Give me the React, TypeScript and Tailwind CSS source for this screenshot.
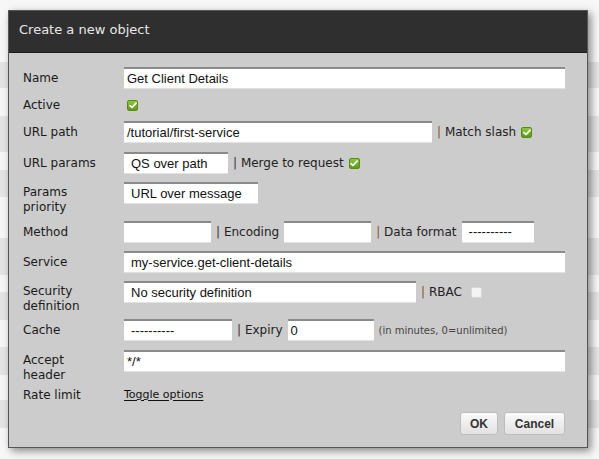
import React from 'react';

const labelFont = { fontFamily: '"DejaVu Sans", Verdana, sans-serif' };

const Check = ({ on }: { on: boolean }) =>
    on ? (
        <span className="inline-flex w-[11px] h-[11px] items-center justify-center rounded-[2px] border border-[#5a8a12] bg-gradient-to-b from-[#8cc63f] to-[#5e9a1a]">
            <svg width="8" height="7" viewBox="0 0 8 7">
                <path d="M1 3.6 L3 5.5 L7 1.2" stroke="white" strokeWidth="1.7" fill="none" strokeLinecap="round" strokeLinejoin="round" />
            </svg>
        </span>
    ) : (
        <span className="inline-block w-[11px] h-[11px] rounded-[2px] border border-[#d8d8d8] bg-[#f4f4f4]" />
    );

const Input = ({ value = '', w, pl = 'pl-[3px]' }: { value?: string; w: string; pl?: string }) => (
    <div
        className={`${w} h-[22px] flex items-center ${pl} bg-white border-t-2 border-t-[#8a8a8a] border-b border-b-[#e2e2e2] text-[13px] text-[#111]`}
        style={{ fontFamily: '"Liberation Sans", Arial, sans-serif' }}
    >
        {value}
    </div>
);

const Sep = ({ text, dark }: { text: string; dark?: boolean }) => (
    <span className="text-[12px] text-[#222] whitespace-nowrap" style={labelFont}>
        <span className={dark ? 'text-[#3e2a3a]' : 'text-[#8a5526]'}>|</span> {text}
    </span>
);

const Row = ({ label, children, h = 'h-[22px]', mt, top }: { label: React.ReactNode; children: React.ReactNode; h?: string; mt: string; top?: boolean }) => (
    <div className={`flex ${top ? 'items-start' : 'items-center'} ${h} ${mt}`}>
        <div className={`w-[101px] shrink-0 text-[12px] leading-[15px] text-[#1a1a1a] ${top ? 'pt-[3px]' : 'pt-[1px]'}`} style={labelFont}>
            {label}
        </div>
        <div className="flex items-center gap-[5px]">{children}</div>
    </div>
);

const stripes = [
    [0, 62, false], [62, 26, true], [88, 28, false], [116, 36, true], [152, 18, false], [170, 27, true],
    [197, 41, false], [238, 37, true], [275, 17, false], [292, 28, true], [320, 27, false], [347, 28, true],
    [375, 25, false], [400, 28, true], [428, 31, false],
] as const;

export default function App() {
    return (
        <div className="relative w-[599px] h-[459px] overflow-hidden bg-[#f7f7f7]">
            {/* background table */}
            <div className="flex flex-col">
                {stripes.map(([, h, g], i) => (
                    <div key={i} style={{ height: h }} className={g ? 'bg-[#e4e4e4]' : 'bg-[#f7f7f7]'} />
                ))}
            </div>

            {/* dialog */}
            <div className="absolute left-[8px] top-[10px] w-[580px] h-[438px] flex flex-col border border-[#555] bg-[#cccccc] shadow-[3px_3px_8px_rgba(0,0,0,0.45)]">
                <div className="h-[42px] shrink-0 bg-[#2f2f2f] pl-[10px] pt-[10px] text-[13px] leading-[17px] text-[#e8e8e8] border-b border-[#1a1a1a]" style={labelFont}>
                    Create a new object
                </div>
                <div className="flex flex-col pl-[14px]">
                    <Row label="Name" mt="mt-[14px]">
                        <Input w="w-[441px]" value="Get Client Details" />
                    </Row>
                    <Row label="Active" h="h-[14px]" mt="mt-[9px]">
                        <span className="pl-[3px] flex"><Check on /></span>
                    </Row>
                    <Row label="URL path" mt="mt-[9px]">
                        <Input w="w-[308px]" value="/tutorial/first-service" />
                        <Sep text="Match slash" />
                        <Check on />
                    </Row>
                    <Row label="URL params" mt="mt-[9px]">
                        <Input w="w-[104px]" value="QS over path" pl="pl-[7px]" />
                        <Sep text="Merge to request" dark />
                        <Check on />
                    </Row>
                    <Row label={<>Params<br />priority</>} h="h-[30px]" mt="mt-[8px]" top>
                        <Input w="w-[134px]" value="URL over message" pl="pl-[7px]" />
                    </Row>
                    <Row label="Method" h="h-[23px]" mt="mt-[8px]">
                        <Input w="w-[87px]" />
                        <Sep text="Encoding" dark />
                        <Input w="w-[87px]" />
                        <Sep text="Data format" />
                        <Input w="w-[72px]" value="----------" pl="pl-[7px]" />
                    </Row>
                    <Row label="Service" mt="mt-[8px]">
                        <Input w="w-[441px]" value="my-service.get-client-details" pl="pl-[7px]" />
                    </Row>
                    <Row label={<>Security<br />definition</>} h="h-[30px]" mt="mt-[8px]" top>
                        <Input w="w-[292px]" value="No security definition" pl="pl-[7px]" />
                        <Sep text="RBAC" />
                        <span className="ml-[4px] flex"><Check on={false} /></span>
                    </Row>
                    <Row label="Cache" mt="mt-[8px]">
                        <Input w="w-[108px]" value="----------" pl="pl-[7px]" />
                        <Sep text="Expiry" dark />
                        <Input w="w-[86px]" value="0" />
                        <span className="text-[10px] text-[#444]" style={labelFont}>(in minutes, 0=unlimited)</span>
                    </Row>
                    <Row label={<>Accept<br />header</>} h="h-[30px]" mt="mt-[9px]" top>
                        <Input w="w-[441px]" value="*/*" />
                    </Row>
                    <Row label="Rate limit" h="h-[14px]" mt="mt-[8px]">
                        <span className="text-[11px] text-[#111] underline underline-offset-2" style={labelFont}>Toggle options</span>
                    </Row>
                    <div className="flex justify-end gap-[6px] mt-[10px] pr-[22px]">
                        {['OK', 'Cancel'].map((b) => (
                            <button
                                key={b}
                                className={`h-[23px] ${b === 'OK' ? 'w-[38px]' : 'w-[61px]'} rounded-[3px] border border-[#bdbdbd] bg-gradient-to-b from-[#fafafa] to-[#e2e2e2] text-[12px] font-bold text-[#333]`}
                                style={{ fontFamily: '"Liberation Sans", Arial, sans-serif' }}
                            >
                                {b}
                            </button>
                        ))}
                    </div>
                </div>
            </div>
        </div>
    );
}
